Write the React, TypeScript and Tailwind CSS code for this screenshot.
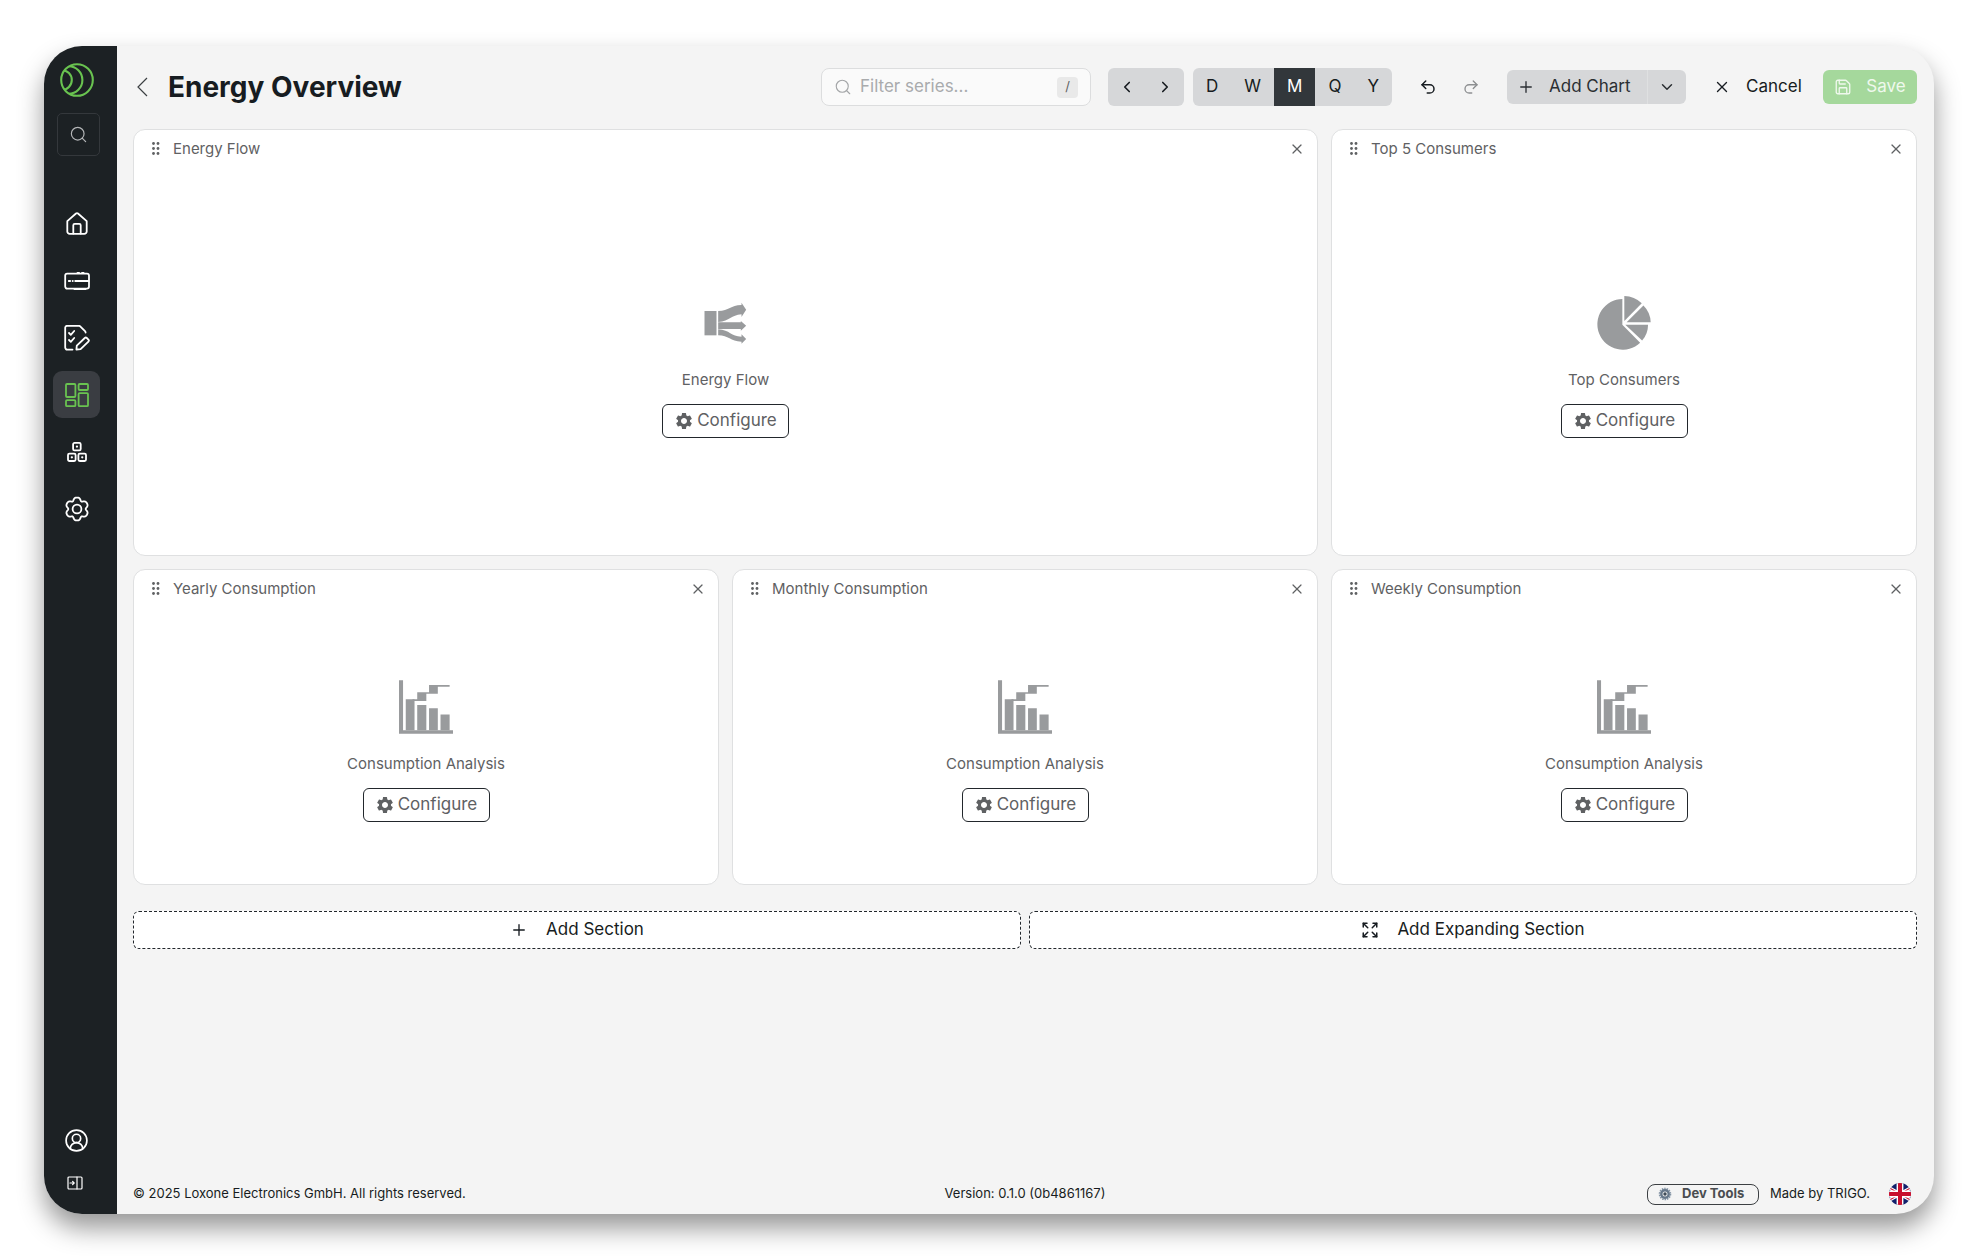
import type { ReactNode } from "react";
import {
  ChevronDown,
  ChevronLeft,
  ChevronRight,
  CircleUserRound,
  Expand,
  Plus,
  Redo2,
  Save,
  Search,
  Undo2,
  X,
} from "lucide-react";
import { MdSettings } from "react-icons/md";

// Smooth six-lobed outline for the settings gear
const gearPath =
  Array.from({ length: 90 }, (_, i) => {
    const t = (i / 90) * Math.PI * 2;
    const r = 10.4 + 1.4 * Math.cos(6 * t) + 0.35 * Math.cos(12 * t + Math.PI);
    const x = 13 + r * Math.sin(t);
    const y = 13 - r * Math.cos(t);
    return `${i ? "L" : "M"}${x.toFixed(2)} ${y.toFixed(2)}`;
  }).join("") + "Z";

function Logo() {
  return (
    <svg viewBox="0 0 34 34" className="h-[34px] w-[34px]" fill="none" stroke="#69c350" strokeWidth="2.1">
      <clipPath id="logo-disc">
        <circle cx="17" cy="17" r="16" />
      </clipPath>
      <circle cx="17" cy="17" r="15.8" />
      <g clipPath="url(#logo-disc)">
        <circle cx="8.6" cy="17" r="13.8" />
        <circle cx="2" cy="17" r="9.8" />
      </g>
    </svg>
  );
}

function NavSvg({ children }: { children: ReactNode }) {
  return (
    <svg
      viewBox="0 0 26 26"
      className="h-[26px] w-[26px]"
      fill="none"
      stroke="currentColor"
      strokeWidth="1.8"
      strokeLinecap="round"
      strokeLinejoin="round"
    >
      {children}
    </svg>
  );
}

const navItems = [
  {
    label: "Home",
    icon: (
      <NavSvg>
        <path d="M3.3 10.2 12 2.5q1-.8 2 0l8.7 7.7v10.2a2.4 2.4 0 0 1-2.4 2.4H5.7a2.4 2.4 0 0 1-2.4-2.4z" />
        <path d="M9.3 22.6v-8.4q0-1.4 1.4-1.4h4.6q1.4 0 1.4 1.4v8.4" />
      </NavSvg>
    ),
  },
  {
    label: "Devices",
    icon: (
      <NavSvg>
        <rect x="1.2" y="5.6" width="23.8" height="15" rx="2" />
        <path d="M4.8 13h1.4M8.6 13h.2M11.2 13h13.4M10.5 21.2h11M13.5 4.8h1.6M18 4.8h1.6" />
      </NavSvg>
    ),
  },
  {
    label: "Tasks",
    icon: (
      <NavSvg>
        <path d="M8.5 24.6H3.2a2 2 0 0 1-2-2V2.8a2 2 0 0 1 2-2h11.6q.8 0 1.4.6l4.8 4.8q.6.6.6 1.4" />
        <path d="m5 8 1.8 1.8 3.4-3.8M5 15l1.8 1.8 3.4-3.8" />
        <path d="m12.4 24.6.4-4 8-7.6q1-.9 2 0l1.6 1.6q1 1 0 2l-7.8 7.6z" />
      </NavSvg>
    ),
  },
  {
    label: "Dashboards",
    active: true,
    icon: (
      <NavSvg>
        <rect x="2" y="2" width="9.4" height="13" rx="1" />
        <rect x="14.6" y="2" width="9.4" height="6" rx="1" />
        <rect x="2" y="18.2" width="9.4" height="6" rx="1" />
        <rect x="14.6" y="11.2" width="9.4" height="13" rx="1" />
      </NavSvg>
    ),
  },
  {
    label: "Blocks",
    icon: (
      <NavSvg>
        <rect x="9.1" y="3.9" width="7.6" height="7.4" rx="1.4" />
        <rect x="4" y="14.6" width="7.6" height="7.4" rx="1.4" />
        <rect x="14.4" y="14.6" width="7.6" height="7.4" rx="1.4" />
        <path d="M12.9 7.6h.1M7.8 18.3h.1M18.2 18.3h.1" strokeWidth="2.2" />
      </NavSvg>
    ),
  },
  {
    label: "Settings",
    icon: (
      <NavSvg>
        <path d={gearPath} />
        <circle cx="13" cy="13" r="4.4" />
      </NavSvg>
    ),
  },
];

function FlowIcon() {
  return (
    <svg viewBox="186 46 140 162" className="h-[54px] w-[47px]" fill="#999b9d">
      <path d="M193 91h36v73h-36z" />
      <path d="M234 91c34 0 36-18 70-18v-7l14 21-14 22v-8c-32 2-34 21-70 23z" />
      <path d="M234 125h68v-4l16 14-16 15v-5h-68z" />
      <path d="M234 146c36 2 38 22 70 22v-7l14 14-14 14v-6c-34-1-38-19-70-19z" />
    </svg>
  );
}

function PieIcon() {
  return (
    <svg viewBox="168 48 162 164" className="h-[54px] w-[54px]" fill="#999b9d">
      <path d="M244 57a77 77 0 1 0 54 133l-54-55z" />
      <path d="M250 48a80 80 0 0 1 53 22l-53 54z" />
      <path d="M308 77a74 74 0 0 1 22 51h-73z" />
      <path d="M253 135h69a72 72 0 0 1-18 48z" />
    </svg>
  );
}

function BarsIcon() {
  return (
    <svg viewBox="210 361 160 160" className="h-[54px] w-[54px]" fill="#999b9d">
      <path d="M210 362h12v148h148v10H210z" />
      <path d="M230 418h26v92h-26zM264 435h27v75h-27zM299 445h26v65h-26zM333 463h27v47h-27z" />
      <path d="M250 418h14v-21h35v-21h61v5h-35v21h-34v21h-41z" />
    </svg>
  );
}

function GripIcon() {
  return (
    <svg viewBox="0 0 8 14" className="h-[14px] w-2" fill="#5f6163">
      {[1.5, 6.5, 11.5].map((y) => (
        <g key={y}>
          <circle cx="1.5" cy={y} r="1.4" />
          <circle cx="6" cy={y} r="1.4" />
        </g>
      ))}
    </svg>
  );
}

function FlagIcon() {
  return (
    <svg viewBox="0 0 22 22" className="h-[22px] w-[22px]">
      <clipPath id="flag-disc">
        <circle cx="11" cy="11" r="11" />
      </clipPath>
      <g clipPath="url(#flag-disc)">
        <path d="M0 0h22v22H0z" fill="#12206b" />
        <path d="M-3 3 25 19M25 3-3 19" stroke="#fff" strokeWidth="3.4" />
        <path d="M-3 3 25 19M25 3-3 19" stroke="#c8102e" strokeWidth="1.1" />
        <path d="M11 0v22M0 11h22" stroke="#fff" strokeWidth="6.8" />
        <path d="M11 0v22M0 11h22" stroke="#c8102e" strokeWidth="4" />
      </g>
    </svg>
  );
}

function DevGearIcon() {
  return (
    <svg viewBox="0 0 14 14" className="h-[14px] w-[14px]" fill="none">
      <circle cx="7" cy="7" r="5.4" stroke="#8494a5" strokeWidth="1.8" strokeDasharray="1.5 0.9" />
      <circle cx="7" cy="7" r="3.7" stroke="#66778a" strokeWidth="2.4" />
      <circle cx="7" cy="7" r="1.7" fill="#3f4b58" />
    </svg>
  );
}

function Sidebar() {
  return (
    <aside className="flex w-[73px] shrink-0 flex-col bg-[#1c2124] pt-[17px] pb-[23px] pl-[9px] text-white">
      <div className="flex w-[47px] flex-1 flex-col items-center">
        <a href="#home" aria-label="Start">
          <Logo />
        </a>
        <button
          aria-label="Search"
          className="mt-4 flex h-[43px] w-[43px] items-center justify-center self-end rounded-[5px] border border-[#34383c] text-[#b4b6b8]"
        >
          <Search size={19} strokeWidth={1.5} />
        </button>
        <nav className="mt-11 flex flex-col gap-[10px]">
          {navItems.map((item) => (
            <a
              key={item.label}
              href={`#${item.label.toLowerCase()}`}
              aria-label={item.label}
              className={
                item.active
                  ? "flex h-[47px] w-[47px] items-center justify-center rounded-[9px] bg-[#3a3d42] text-[#69c350]"
                  : "flex h-[47px] w-[47px] items-center justify-center rounded-[9px]"
              }
            >
              {item.icon}
            </a>
          ))}
        </nav>
        <button aria-label="Account" className="mt-auto">
          <CircleUserRound size={25} strokeWidth={1.6} />
        </button>
        <button aria-label="Expand sidebar" className="mt-[22px] pr-1">
          <svg
            viewBox="0 0 16 16"
            className="h-4 w-4"
            fill="none"
            stroke="currentColor"
            strokeLinecap="round"
            strokeLinejoin="round"
          >
            <rect x="1" y="2" width="14" height="12" rx="1" strokeWidth="1.2" />
            <path d="M10 2v12M3 8h4M5.6 6.4 7.2 8 5.6 9.6" strokeWidth="1.2" />
          </svg>
        </button>
      </div>
    </aside>
  );
}

function Header() {
  return (
    <header className="flex h-[38px] items-center">
      <button aria-label="Back" className="pl-1">
        <svg viewBox="0 0 11 20" className="h-5 w-[11px]" fill="none" stroke="#3c4043" strokeWidth="1.2">
          <path d="M10 1 1 10l9 9" />
        </svg>
      </button>
      <h1 className="ml-5 text-[28px] font-bold text-[#171c21]">Energy Overview</h1>

      <label className="ml-auto flex h-[38px] w-[270px] items-center rounded-[8px] border border-[#dcddde] bg-[#fafafa] pr-3 pl-3 text-[#a3a5a7]">
        <Search size={18} strokeWidth={1.5} className="shrink-0" />
        <input
          type="text"
          aria-label="Filter series"
          placeholder="Filter series..."
          className="ml-2 min-w-0 flex-1 bg-transparent text-[17px] outline-none placeholder:text-[#a9abad]"
        />
        <kbd className="flex h-[21px] w-[21px] items-center justify-center rounded-[4px] bg-[#e9e9e9] font-['Inter'] text-[13px] text-[#5f6163]">
          /
        </kbd>
      </label>

      <div className="ml-[17px] flex h-[38px] rounded-[6px] bg-[#d6d7d9]">
        <button aria-label="Previous" className="flex w-[38px] items-center justify-center">
          <ChevronLeft size={18} strokeWidth={2.2} />
        </button>
        <button aria-label="Next" className="flex w-[38px] items-center justify-center">
          <ChevronRight size={18} strokeWidth={2.2} />
        </button>
      </div>

      <div className="ml-[9px] flex h-[38px] rounded-[6px] bg-[#d6d7d9] text-[17px]">
        {["D", "W", "M", "Q", "Y"].map((p) => (
          <button key={p} className={p === "M" ? "bg-[#32373b] px-[13px] text-white" : "px-[13px]"}>
            {p}
          </button>
        ))}
      </div>

      <div className="mr-[15px] ml-[14px] flex">
        <button aria-label="Undo" className="flex w-[43px] justify-center">
          <Undo2 size={18} strokeWidth={2} />
        </button>
        <button aria-label="Redo" className="flex w-[43px] justify-center text-[#8d8f91]">
          <Redo2 size={18} strokeWidth={1.8} />
        </button>
      </div>

      <div className="flex h-[34px] rounded-[6px] bg-[#d6d7d9] text-[17px] text-[#2b2f33]">
        <button className="flex w-[141px] items-center gap-[14px] border-r border-[#dfe0e1] pl-[10px]">
          <Plus size={18} strokeWidth={1.8} />
          Add Chart
        </button>
        <button aria-label="More chart types" className="flex w-[38px] items-center justify-center">
          <ChevronDown size={18} strokeWidth={2} />
        </button>
      </div>

      <button className="ml-[27px] flex h-[34px] w-[110px] items-center gap-[15px] text-[17px]">
        <X size={18} strokeWidth={1.8} />
        Cancel
      </button>

      <button className="flex h-[34px] w-[94px] items-center justify-center gap-[14px] rounded-[6px] bg-[#a5d89c] text-[17px] text-[#eff8ed]">
        <Save size={18} strokeWidth={1.8} />
        Save
      </button>
    </header>
  );
}

type WidgetProps = {
  title: string;
  kind: string;
  icon: ReactNode;
  className: string;
};

function Widget({ title, kind, icon, className }: WidgetProps) {
  return (
    <section className={`flex flex-col rounded-[12px] border border-[#dfe0e1] bg-white text-[#5f6163] ${className}`}>
      <div className="flex h-[38px] items-center pr-3 pl-[18px]">
        <GripIcon />
        <h2 className="ml-[13px] text-[15px]">{title}</h2>
        <button aria-label={`Remove ${title}`} className="ml-auto">
          <X size={16} strokeWidth={1.8} />
        </button>
      </div>
      <div className="flex flex-1 flex-col items-center justify-center pt-[10px]">
        {icon}
        <p className="mt-5 text-[15px] leading-5">{kind}</p>
        <button className="mt-[14px] flex h-[34px] w-[127px] items-center justify-center gap-[3px] rounded-[6px] border border-[#22272c] text-[17px]">
          <MdSettings size={20} />
          Configure
        </button>
      </div>
    </section>
  );
}

export default function App() {
  return (
    <div className="flex min-h-screen bg-white pt-[46px] pr-[42px] pb-[46px] pl-[44px] font-['Inter',sans-serif] text-[#171c21]">
      <div className="flex flex-1 overflow-hidden rounded-[38px] bg-[#f4f4f4] shadow-[0_14px_26px_rgba(0,0,0,0.41)]">
        <Sidebar />
        <main className="flex min-w-0 flex-1 flex-col pt-[22px] pr-[17px] pb-[9px] pl-4">
          <Header />

          <div className="mt-[23px] grid grid-cols-3 gap-[13px]">
            <Widget title="Energy Flow" kind="Energy Flow" icon={<FlowIcon />} className="col-span-2 min-h-[427px]" />
            <Widget title="Top 5 Consumers" kind="Top Consumers" icon={<PieIcon />} className="min-h-[427px]" />
            {["Yearly", "Monthly", "Weekly"].map((span) => (
              <Widget
                key={span}
                title={`${span} Consumption`}
                kind="Consumption Analysis"
                icon={<BarsIcon />}
                className="min-h-[316px]"
              />
            ))}
          </div>

          <div className="mt-[26px] grid grid-cols-2 gap-2 text-[17px]">
            <button className="flex h-[38px] items-center justify-center gap-[18px] rounded-[6px] border border-dashed border-[#22272c] bg-white">
              <Plus size={18} strokeWidth={1.8} />
              Add Section
            </button>
            <button className="flex h-[38px] items-center justify-center gap-[18px] rounded-[6px] border border-dashed border-[#22272c] bg-white">
              <Expand size={18} strokeWidth={2} />
              Add Expanding Section
            </button>
          </div>

          <footer className="mt-auto grid grid-cols-[1fr_auto_1fr] items-center text-[13px]">
            <p>© 2025 Loxone Electronics GmbH. All rights reserved.</p>
            <p>Version: 0.1.0 (0b4861167)</p>
            <div className="flex items-center justify-end pr-[6px]">
              <button className="flex h-[21px] w-[112px] items-center gap-[10px] rounded-[8px] border border-[#3c4043] pl-[10px] font-bold text-[#4a4d50]">
                <DevGearIcon />
                Dev Tools
              </button>
              <span className="mr-[19px] ml-[11px]">Made by TRIGO.</span>
              <button aria-label="Language: English">
                <FlagIcon />
              </button>
            </div>
          </footer>
        </main>
      </div>
    </div>
  );
}
